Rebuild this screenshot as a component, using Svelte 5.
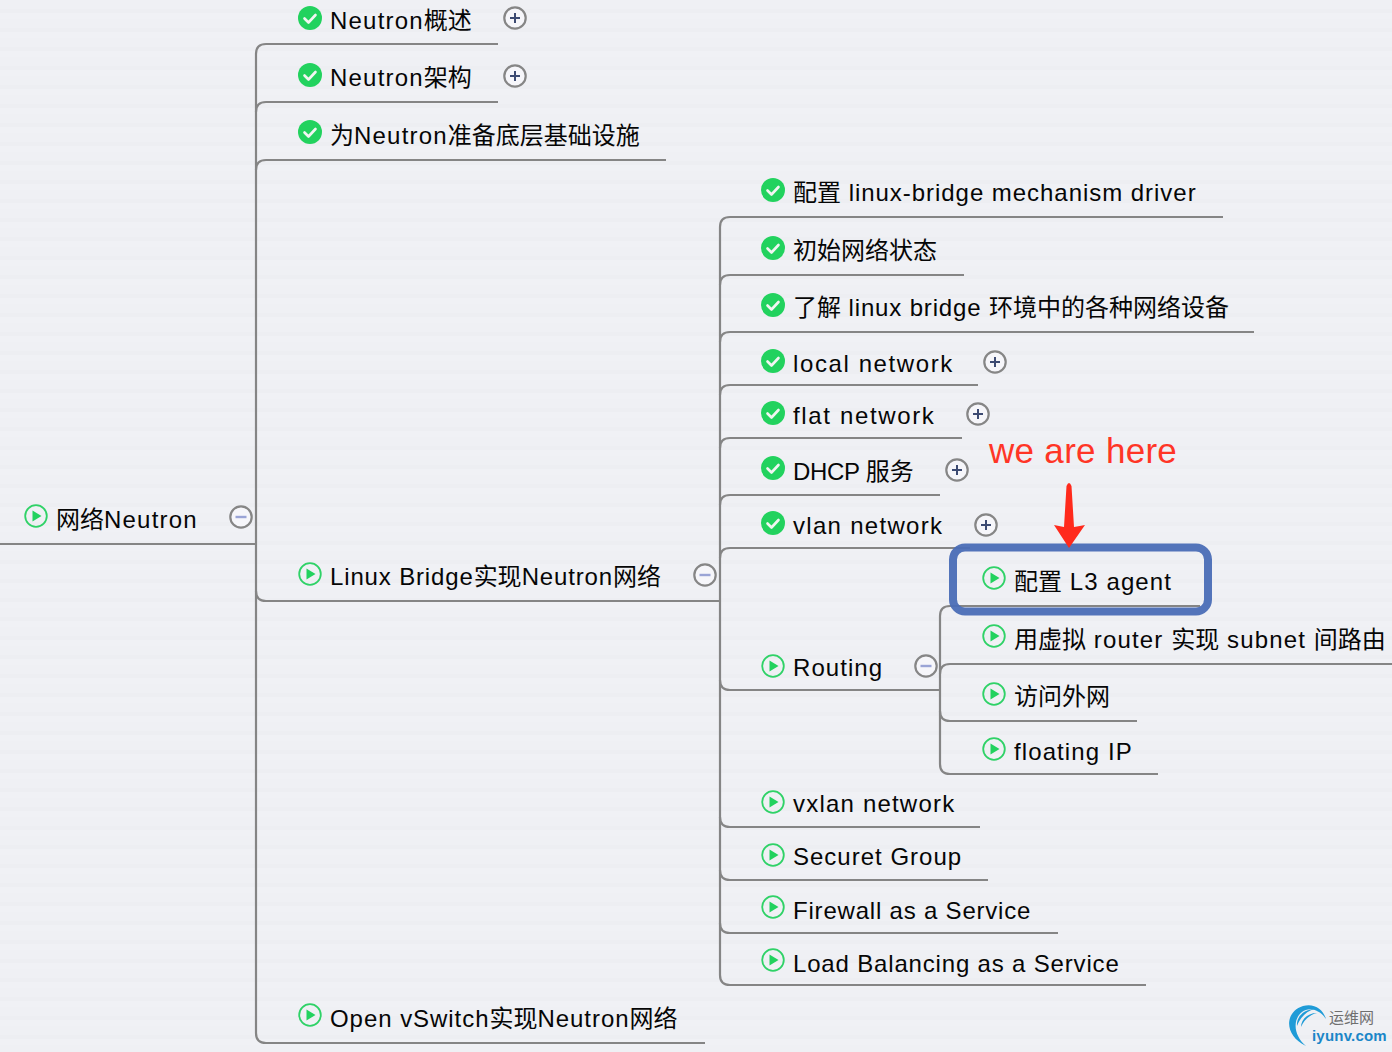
<script>
  const nodes = [
    { x: 36, y: 516, t: '网络Neutron', s: 'play', ls: 1.2, dy: 2, m: { k: 'minus', x: 241, y: 517 } },
    { x: 310, y: 18, t: 'Neutron概述', s: 'check', ls: 1.2, dy: 1, m: { k: 'plus', x: 515, y: 18 } },
    { x: 310, y: 75, t: 'Neutron架构', s: 'check', ls: 1.2, dy: 1, m: { k: 'plus', x: 515, y: 76 } },
    { x: 310, y: 132, t: '为Neutron准备底层基础设施', s: 'check', ls: 1.2, dy: 2 },
    { x: 310, y: 574, t: 'Linux Bridge实现Neutron网络', s: 'play', ls: 0.85, dy: 1, m: { k: 'minus', x: 705, y: 575 } },
    { x: 310, y: 1015, t: 'Open vSwitch实现Neutron网络', s: 'play', ls: 0.95, dy: 2 },
    { x: 773, y: 190, t: '配置 linux-bridge mechanism driver', s: 'check', ls: 0.96, dy: 1 },
    { x: 773, y: 248, t: '初始网络状态', s: 'check', ls: 0, dy: 1 },
    { x: 773, y: 305, t: '了解 linux bridge 环境中的各种网络设备', s: 'check', ls: 0.85, dy: 1 },
    { x: 773, y: 361, t: 'local network', s: 'check', ls: 1.6, dy: 1, m: { k: 'plus', x: 995, y: 362 } },
    { x: 773, y: 413, t: 'flat network', s: 'check', ls: 1.65, dy: 1, m: { k: 'plus', x: 978, y: 414 } },
    { x: 773, y: 468, t: 'DHCP 服务', s: 'check', ls: -0.3, dy: 2, m: { k: 'plus', x: 957, y: 470 } },
    { x: 773, y: 523, t: 'vlan network', s: 'check', ls: 1.3, dy: 1, m: { k: 'plus', x: 986, y: 525 } },
    { x: 773, y: 666, t: 'Routing', s: 'play', ls: 1.05, dy: 0, m: { k: 'minus', x: 926, y: 666 } },
    { x: 773, y: 802, t: 'vxlan network', s: 'play', ls: 1.2, dy: 0 },
    { x: 773, y: 855, t: 'Securet Group', s: 'play', ls: 1, dy: 0 },
    { x: 773, y: 907, t: 'Firewall as a Service', s: 'play', ls: 0.8, dy: 2 },
    { x: 773, y: 960, t: 'Load Balancing as a Service', s: 'play', ls: 0.83, dy: 2 },
    { x: 994, y: 578, t: '配置 L3 agent', s: 'play', ls: 1.1, dy: 2 },
    { x: 994, y: 636, t: '用虚拟 router 实现 subnet 间路由', s: 'play', ls: 1.15, dy: 2 },
    { x: 994, y: 694, t: '访问外网', s: 'play', ls: 0, dy: 1 },
    { x: 994, y: 749, t: 'floating IP', s: 'play', ls: 1.1, dy: 1 }
  ];
  const paths = [
    'M0 544H256',
    'M498 44H266Q256 44 256 54V1033Q256 1043 266 1043H705',
    'M498 102H266Q256 102 256 112',
    'M666 160H266Q256 160 256 170',
    'M256 591Q256 601 266 601H720',
    'M1223 217H730Q720 217 720 227V975Q720 985 730 985H1146',
    'M964 275H730Q720 275 720 285',
    'M1254 332H730Q720 332 720 342',
    'M978 385H730Q720 385 720 395',
    'M962 438H730Q720 438 720 448',
    'M940 495H730Q720 495 720 505',
    'M970 548H730Q720 548 720 558',
    'M720 680Q720 690 730 690H940',
    'M720 817Q720 827 730 827H980',
    'M720 870Q720 880 730 880H988',
    'M720 923Q720 933 730 933H1058',
    'M1200 606H950Q940 606 940 616V764Q940 774 950 774H1158',
    'M1392 664H950Q940 664 940 674',
    'M940 711Q940 721 950 721H1137'
  ];
  const runs = (t) => t.split(/([\u4e00-\u9fff]+)/).filter(Boolean);
  const isHan = (r) => /[\u4e00-\u9fff]/.test(r);
</script>

<main class="canvas">
  <svg class="layer" width="1392" height="1052" viewBox="0 0 1392 1052" aria-hidden="true">
    {#each paths as d}
      <path {d} class="branch" />
    {/each}

    {#each nodes as n}
      {#if n.s === 'check'}
        <circle cx={n.x} cy={n.y} r="12" class="done" />
        <path d="M{n.x - 5.5} {n.y + 0.5}l4 4 7-7.5" class="tick" />
      {:else}
        <circle cx={n.x} cy={n.y} r="10.8" class="ring" />
        <path d="M{n.x - 3.5} {n.y - 5.5}v11l9-5.5z" class="tri" />
      {/if}
      {#if n.m}
        <circle cx={n.m.x} cy={n.m.y} r="10.7" class="fold" />
        {#if n.m.k === 'plus'}
          <path d="M{n.m.x - 5} {n.m.y}h10M{n.m.x} {n.m.y - 5}v10" class="plus" />
        {:else}
          <path d="M{n.m.x - 5.5} {n.m.y}h11" class="minus" />
        {/if}
      {/if}
    {/each}

    <rect x="953" y="547.5" width="255" height="64" rx="12" class="box" />
    <path d="M1066.5 486Q1069 480 1071.5 486L1074 527Q1080 526 1085 525L1069 548 1054 525Q1059 526 1064 527Z" class="arrow" />

    <path d="M1306 1046C1284 1036 1284 1012 1303 1006C1314 1003 1323 1009 1326 1019C1319 1009 1309 1007 1302 1012C1292 1020 1294 1036 1306 1046Z" class="swoosh" />
    <path d="M1297 1026C1296 1017 1304 1009 1315 1009C1306 1011 1300 1018 1297 1026Z" class="swoosh" />
    <path d="M1301 1027C1301 1020 1307 1013 1317 1013C1309 1015 1304 1020 1301 1027Z" class="swoosh" />
  </svg>

  {#each nodes as n}
    <div class="label" style="left:{n.x + 20}px;top:{n.y - 14 + n.dy}px;letter-spacing:{n.ls}px">
      {#each runs(n.t) as r}<span class:han={isHan(r)}>{r}</span>{/each}
    </div>
  {/each}

  <div class="note">we are here</div>
  <div class="mark-a">运维网</div>
  <div class="mark-b">iyunv.com</div>
</main>

<style>
  :global(body) {
    margin: 0;
    background: #eff0f4;
  }
  .canvas {
    position: relative;
    width: 1392px;
    height: 1052px;
    overflow: hidden;
    background: repeating-linear-gradient(180deg, #eff0f4 0 9px, #edeef2 9px 13px, #f0f1f5 13px 19px);
    font-family: "Liberation Sans", "Noto Sans CJK SC", sans-serif;
  }
  .layer {
    position: absolute;
    inset: 0;
  }
  .branch {
    fill: none;
    stroke: #858585;
    stroke-width: 2.2;
  }
  .done { fill: #22d25e; }
  .tick {
    fill: none;
    stroke: #f2f5f2;
    stroke-width: 2.6;
    stroke-linecap: round;
    stroke-linejoin: round;
  }
  .ring {
    fill: none;
    stroke: #2fd267;
    stroke-width: 1.8;
  }
  .tri { fill: #22d25e; }
  .fold {
    fill: #f6f6fa;
    stroke: #868686;
    stroke-width: 2.2;
  }
  .plus {
    fill: none;
    stroke: #3c4a72;
    stroke-width: 2;
  }
  .minus {
    fill: none;
    stroke: #9aa4d6;
    stroke-width: 2.4;
  }
  .box {
    fill: none;
    stroke: #4a6db6;
    stroke-width: 8;
    stroke-opacity: 0.95;
  }
  .arrow { fill: #ff2a1c; }
  .swoosh { fill: #1f9bd7; }
  .label {
    position: absolute;
    font-size: 24px;
    line-height: 32px;
    color: #060606;
    white-space: nowrap;
  }
  .han {
    letter-spacing: 0;
  }
  .note {
    position: absolute;
    left: 989px;
    top: 430px;
    font-size: 35px;
    line-height: 42px;
    letter-spacing: 0.3px;
    color: #ff3526;
    white-space: nowrap;
  }
  .mark-a {
    position: absolute;
    left: 1329px;
    top: 1009px;
    font-size: 15px;
    line-height: 18px;
    color: #6f6f6f;
    white-space: nowrap;
  }
  .mark-b {
    position: absolute;
    left: 1312px;
    top: 1027px;
    font-size: 15px;
    line-height: 18px;
    letter-spacing: 0.2px;
    font-weight: bold;
    color: #1a86c8;
    white-space: nowrap;
  }
</style>
